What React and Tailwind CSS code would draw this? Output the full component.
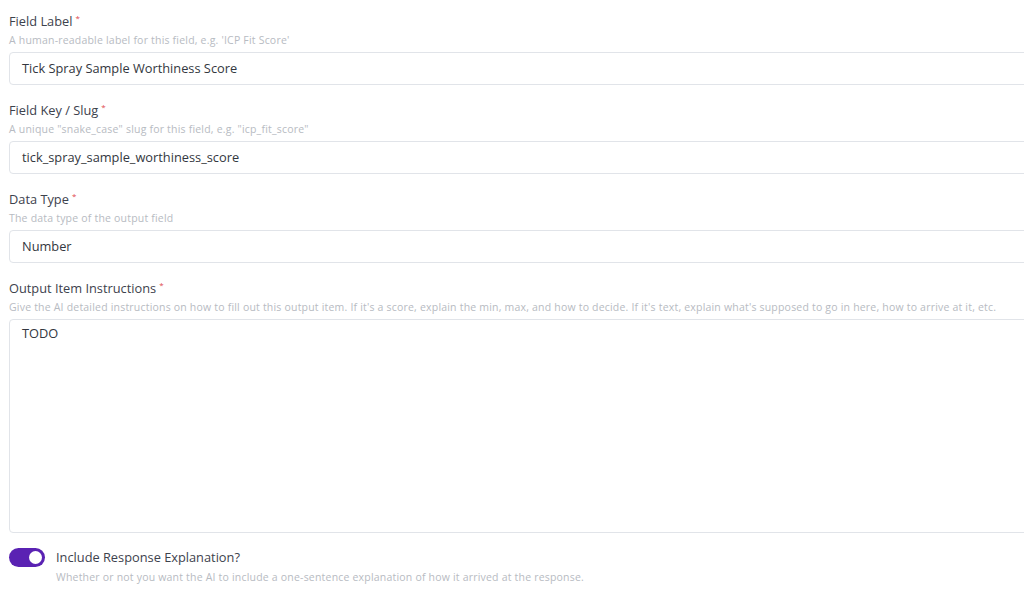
import React, { useState } from 'react';

const font = { fontFamily: '"Open Sans", "Liberation Sans", sans-serif' };

const Label = ({ children }) => (
  <div className="text-[12.8px] leading-[18px] text-[#3d424d]">
    {children}
    <span className="ml-[3px] align-top text-[8px] leading-[12px] text-[#e0474c]">*</span>
  </div>
);

const Help = ({ children }) => (
  <div className="mt-[3px] text-[10.5px] leading-[15px] tracking-[0.2px] text-[#b7bbc2] whitespace-nowrap">{children}</div>
);

const Field = ({ label, help, value }) => (
  <div className="mb-[16px]">
    <Label>{label}</Label>
    <Help>{help}</Help>
    <div className="mt-[4px] h-[33px] w-[1040px] rounded-[4px] border border-[#e1e4e9] bg-white px-[12px] flex items-center text-[12.8px] text-[#333740]">
      {value}
    </div>
  </div>
);

const Toggle = ({ on, onClick, className = '' }) => (
  <button
    onClick={onClick}
    className={`relative h-[19px] w-[36px] shrink-0 rounded-full ${on ? 'bg-[#5a22b3]' : 'bg-[#d4d7dd]'} ${className}`}
  >
    <span
      className={`absolute top-[3px] h-[13px] w-[13px] rounded-full bg-white ${on ? 'left-[20px]' : 'left-[3px]'}`}
    />
  </button>
);

export default function App() {
  const [explain, setExplain] = useState(true);
  const [other, setOther] = useState(false);

  return (
    <div className="h-[604px] w-screen overflow-hidden bg-white" style={font}>
      <div className="pl-[9px] pt-[12px]">
        <Field
          label="Field Label"
          help="A human-readable label for this field, e.g. 'ICP Fit Score'"
          value="Tick Spray Sample Worthiness Score"
        />
        <Field
          label="Field Key / Slug"
          help={'A unique "snake_case" slug for this field, e.g. "icp_fit_score"'}
          value="tick_spray_sample_worthiness_score"
        />
        <Field label="Data Type" help="The data type of the output field" value="Number" />

        <div className="mb-[15px]">
          <Label>Output Item Instructions</Label>
          <Help>
            Give the AI detailed instructions on how to fill out this output item. If it's a score, explain the min, max, and how to decide. If it's text, explain what's supposed to go in here, how to arrive at it, etc.
          </Help>
          <div className="mt-[4px] h-[214px] w-[1040px] rounded-[4px] border border-[#e1e4e9] bg-white px-[12px] pt-[4px] text-[12.8px] leading-[18px] text-[#333740]">
            TODO
          </div>
        </div>

        <div className="flex gap-[11px]">
          <Toggle on={explain} onClick={() => setExplain(!explain)} />
          <div>
            <div className="text-[12.8px] leading-[19px] text-[#3d424d]">Include Response Explanation?</div>
            <div className="mt-[3px] text-[10.5px] leading-[15px] tracking-[0.2px] text-[#b7bbc2]">
              Whether or not you want the AI to include a one-sentence explanation of how it arrived at the response.
            </div>
          </div>
        </div>

        <div className="mt-[17px] flex gap-[11px]">
          <Toggle on={other} onClick={() => setOther(!other)} className="mt-[8px]" />
          <div className="text-[12.8px] leading-[19px] text-[#3d424d]">Include Confidence Score? Adds a confidence level to the output item</div>
        </div>
      </div>
    </div>
  );
}
